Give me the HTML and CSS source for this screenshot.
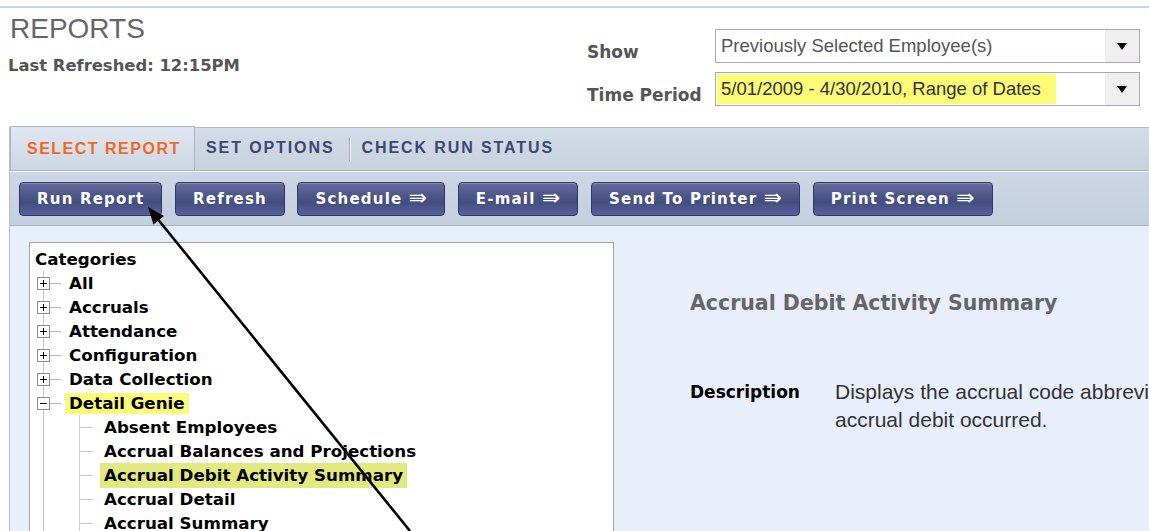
FILE: index.html
```html
<!DOCTYPE html>
<html lang="en">
<head>
<meta charset="utf-8">
<title>Reports</title>
<link rel="stylesheet" href="styles.css">
</head>
<body>
<div class="top-rule"></div>

<header class="page-head">
  <div class="title-block">
    <h1 class="title">REPORTS</h1>
    <p class="refreshed">Last Refreshed: 12:15PM</p>
  </div>
  <div class="filters">
    <span class="filter-label">Show</span>
    <div class="select">
      <span class="select-value">Previously Selected Employee(s)</span>
      <span class="select-btn"><i class="caret"></i></span>
    </div>
    <span class="filter-label">Time Period</span>
    <div class="select">
      <span class="select-value select-value-marked"><mark class="marked">5/01/2009 - 4/30/2010, Range of Dates</mark></span>
      <span class="select-btn"><i class="caret"></i></span>
    </div>
  </div>
</header>

<section class="workspace">
  <nav class="tabbar">
    <span class="tab tab-active">Select Report</span>
    <span class="tab">Set Options</span>
    <span class="tab-sep"></span>
    <span class="tab">Check Run Status</span>
  </nav>

  <div class="toolbar">
    <button class="btn">Run Report</button>
    <button class="btn">Refresh</button>
    <button class="btn">Schedule <span class="btn-arrow">⇛</span></button>
    <button class="btn">E-mail <span class="btn-arrow">⇛</span></button>
    <button class="btn">Send To Printer <span class="btn-arrow">⇛</span></button>
    <button class="btn">Print Screen <span class="btn-arrow">⇛</span></button>
  </div>

  <div class="content">
    <div class="tree-panel">
      <div class="tree-heading">Categories</div>
      <ul class="tree">
        <li class="node">
          <div class="row"><svg class="toggle" width="13" height="13" viewBox="0 0 13 13"><rect x=".5" y=".5" width="12" height="12" fill="#fff" stroke="#8a8a8a"/><path d="M3 6.5h7M6.5 3v7" stroke="#000"/></svg><span class="stub"></span><span class="label">All</span></div>
        </li>
        <li class="node">
          <div class="row"><svg class="toggle" width="13" height="13" viewBox="0 0 13 13"><rect x=".5" y=".5" width="12" height="12" fill="#fff" stroke="#8a8a8a"/><path d="M3 6.5h7M6.5 3v7" stroke="#000"/></svg><span class="stub"></span><span class="label">Accruals</span></div>
        </li>
        <li class="node">
          <div class="row"><svg class="toggle" width="13" height="13" viewBox="0 0 13 13"><rect x=".5" y=".5" width="12" height="12" fill="#fff" stroke="#8a8a8a"/><path d="M3 6.5h7M6.5 3v7" stroke="#000"/></svg><span class="stub"></span><span class="label">Attendance</span></div>
        </li>
        <li class="node">
          <div class="row"><svg class="toggle" width="13" height="13" viewBox="0 0 13 13"><rect x=".5" y=".5" width="12" height="12" fill="#fff" stroke="#8a8a8a"/><path d="M3 6.5h7M6.5 3v7" stroke="#000"/></svg><span class="stub"></span><span class="label">Configuration</span></div>
        </li>
        <li class="node">
          <div class="row"><svg class="toggle" width="13" height="13" viewBox="0 0 13 13"><rect x=".5" y=".5" width="12" height="12" fill="#fff" stroke="#8a8a8a"/><path d="M3 6.5h7M6.5 3v7" stroke="#000"/></svg><span class="stub"></span><span class="label">Data Collection</span></div>
        </li>
        <li class="node">
          <div class="row"><svg class="toggle" width="13" height="13" viewBox="0 0 13 13"><rect x=".5" y=".5" width="12" height="12" fill="#fff" stroke="#8a8a8a"/><path d="M3 6.5h7" stroke="#000"/></svg><span class="stub"></span><span class="label label-marked">Detail Genie</span></div>
          <ul class="leaves">
            <li class="leaf"><span class="dash"></span><span class="label">Absent Employees</span></li>
            <li class="leaf"><span class="dash"></span><span class="label">Accrual Balances and Projections</span></li>
            <li class="leaf"><span class="dash"></span><span class="label label-selected">Accrual Debit Activity Summary</span></li>
            <li class="leaf"><span class="dash"></span><span class="label">Accrual Detail</span></li>
            <li class="leaf"><span class="dash"></span><span class="label">Accrual Summary</span></li>
            <li class="leaf"><span class="dash"></span><span class="label">Accrual Transactions</span></li>
          </ul>
        </li>
      </ul>
    </div>

    <div class="detail">
      <h2 class="detail-title">Accrual Debit Activity Summary</h2>
      <div class="detail-row">
        <span class="detail-key">Description</span>
        <p class="detail-text">Displays the accrual code abbreviation, the amount and the date on which each<br>accrual debit occurred.</p>
      </div>
    </div>
  </div>
</section>

<svg class="pointer" width="1149" height="531" viewBox="0 0 1149 531">
  <line x1="410" y1="531" x2="158.7" y2="220.2" stroke="#000" stroke-width="2.6"/>
  <polygon points="148,207 164,216 153.4,224.5" fill="#000"/>
</svg>
</body>
</html>
```

FILE: styles.css
```css
html, body {
  margin: 0;
  padding: 0;
}

body {
  width: 1149px;
  height: 531px;
  overflow: hidden;
  position: relative;
  background: #fff;
  font-family: "Liberation Sans", Arial, sans-serif;
  color: #000;
}

/* thin rule along the top of the page */
.top-rule {
  height: 2px;
  margin-top: 6px;
  background: #c9d3e4;
}

/* ---------- header ---------- */
.page-head {
  height: 119px;
  display: flex;
  justify-content: space-between;
}

.title {
  margin: 5px 0 0 10px;
  font-size: 28px;
  line-height: 32px;
  font-weight: normal;
  color: #666;
}

.refreshed {
  margin: 10px 0 0 8px;
  font-family: "DejaVu Sans", sans-serif;
  font-weight: bold;
  font-size: 16.4px;
  line-height: 22px;
  color: #555;
}

.filters {
  margin: 21px 9px 0 0;
  display: grid;
  grid-template-columns: 128px 425px;
  grid-auto-rows: 34px;
  row-gap: 9px;
  align-items: center;
}

.filter-label {
  padding-top: 11px;
  font-family: "DejaVu Sans", sans-serif;
  font-weight: bold;
  font-size: 17px;
  line-height: 20px;
  color: #555;
}

.select {
  height: 34px;
  box-sizing: border-box;
  border: 1px solid #a4aab4;
  background: #fff;
  display: flex;
}

.select-value {
  flex: 1;
  display: flex;
  align-items: center;
  padding-left: 5px;
  font-size: 18.5px;
  color: #555;
  white-space: nowrap;
  overflow: hidden;
}

.select-value-marked {
  padding-left: 1px;
  color: #333;
}

.marked {
  display: block;
  height: 30px;
  line-height: 30px;
  padding: 0 15px 0 4px;
  background: #fbfb78;
  color: #333;
}

.select-btn {
  width: 34px;
  background: #efefef;
  display: flex;
  align-items: center;
  justify-content: center;
}

.caret {
  width: 0;
  height: 0;
  border-left: 5.5px solid transparent;
  border-right: 5.5px solid transparent;
  border-top: 7px solid #000;
}

/* ---------- workspace frame ---------- */
.workspace {
  margin-left: 9px;
  border-left: 1px solid #b6bec9;
}

.tabbar {
  height: 42px;
  border-top: 1px solid #b9b9b9;
  border-bottom: 1px solid #a8b0bc;
  background: linear-gradient(#d3dbe6, #c8d2df);
  display: flex;
  align-items: center;
}

.tab {
  padding: 0 15px 0 11px;
  font-weight: bold;
  font-size: 16px;
  letter-spacing: 1.9px;
  text-transform: uppercase;
  color: #3b4775;
  white-space: nowrap;
  position: relative;
  top: -1px;
}

.tab-active {
  align-self: stretch;
  top: 0;
  width: 185px;
  box-sizing: border-box;
  margin-top: -2px;
  padding: 0 0 0 16px;
  letter-spacing: 1.5px;
  display: flex;
  align-items: center;
  border: 1px solid #aeb4bd;
  border-bottom: none;
  background: linear-gradient(#e0e7f1, #ccd6e4);
  color: #f26a1b;
}

.tab-sep {
  width: 1px;
  height: 24px;
  background: #a9b0ba;
  box-shadow: 1px 0 0 #f2f5f9;
}

.toolbar {
  height: 53px;
  border-top: 1px solid #fff;
  border-bottom: 1px solid #a9b1bd;
  background: linear-gradient(#ccd6e4, #c5d0df);
  display: flex;
  align-items: center;
  gap: 12.6px;
  padding-left: 9px;
}

.btn {
  height: 34px;
  padding: 0 17px;
  border: 1px solid #2f3868;
  border-radius: 4px;
  background: linear-gradient(#646e9c 0%, #4c5688 40%, #424d80 60%, #58629a 100%);
  box-shadow: inset 0 1px 0 rgba(255, 255, 255, 0.22);
  color: #fff;
  font-family: "DejaVu Sans", sans-serif;
  font-weight: bold;
  font-size: 15px;
  letter-spacing: 1.2px;
  white-space: nowrap;
  cursor: pointer;
}

.btn-arrow {
  display: inline-block;
  font-weight: normal;
  font-size: 22px;
  line-height: 0;
  letter-spacing: 0;
  vertical-align: -1px;
}

/* ---------- content ---------- */
.content {
  height: 305px;
  box-sizing: border-box;
  padding: 16px 0 0 19px;
  background: #e8eefa;
  display: flex;
  align-items: flex-start;
}

.tree-panel {
  flex: 0 0 585px;
  height: 320px;
  box-sizing: border-box;
  padding: 4px 0 0 5px;
  border: 1px solid #a0a5ad;
  background: #fff;
  font-family: "DejaVu Sans", sans-serif;
  font-weight: bold;
  font-size: 16.7px;
}

.tree-heading {
  line-height: 24px;
}

.tree {
  list-style: none;
  margin: 0 0 0 8px;
  padding: 0;
  border-left: 1px solid #c6c6c6;
}

.row {
  height: 24px;
  margin-left: -7px;
  display: flex;
  align-items: center;
}

.toggle {
  flex: 0 0 13px;
  display: block;
}

.stub {
  width: 11px;
  height: 1px;
  background: #b9b9b9;
}

.label {
  margin-left: 8px;
  white-space: nowrap;
}

.label-marked {
  margin-left: 4px;
  padding: 0 4px;
  line-height: 21px;
  background: #fbfb78;
}

.leaves {
  list-style: none;
  margin: 0 0 0 35px;
  padding: 0;
  border-left: 1px solid #cfcfcf;
}

.leaf {
  height: 24px;
  display: flex;
  align-items: center;
}

.dash {
  width: 13px;
  height: 1px;
  background: #c6c6c6;
}

.leaf .label {
  margin-left: 11px;
}

.leaf .label-selected {
  margin-left: 7px;
  padding: 0 4px;
  line-height: 25px;
  background: #e2e97f;
}

.detail {
  flex: 0 0 700px;
  padding-left: 76px;
}

.detail-title {
  margin: 49px 0 0;
  font-family: "DejaVu Sans", sans-serif;
  font-weight: bold;
  font-size: 20.5px;
  line-height: 24px;
  color: #666;
  white-space: nowrap;
}

.detail-row {
  margin-top: 63px;
  display: flex;
  align-items: flex-start;
}

.detail-key {
  flex: 0 0 145px;
  font-family: "DejaVu Sans", sans-serif;
  font-weight: bold;
  font-size: 17px;
  line-height: 28px;
}

.detail-text {
  margin: 0;
  font-size: 21px;
  line-height: 28px;
  color: #333;
  white-space: nowrap;
}

/* annotation arrow drawn over the page */
.pointer {
  position: absolute;
  left: 0;
  top: 0;
  pointer-events: none;
}
```
